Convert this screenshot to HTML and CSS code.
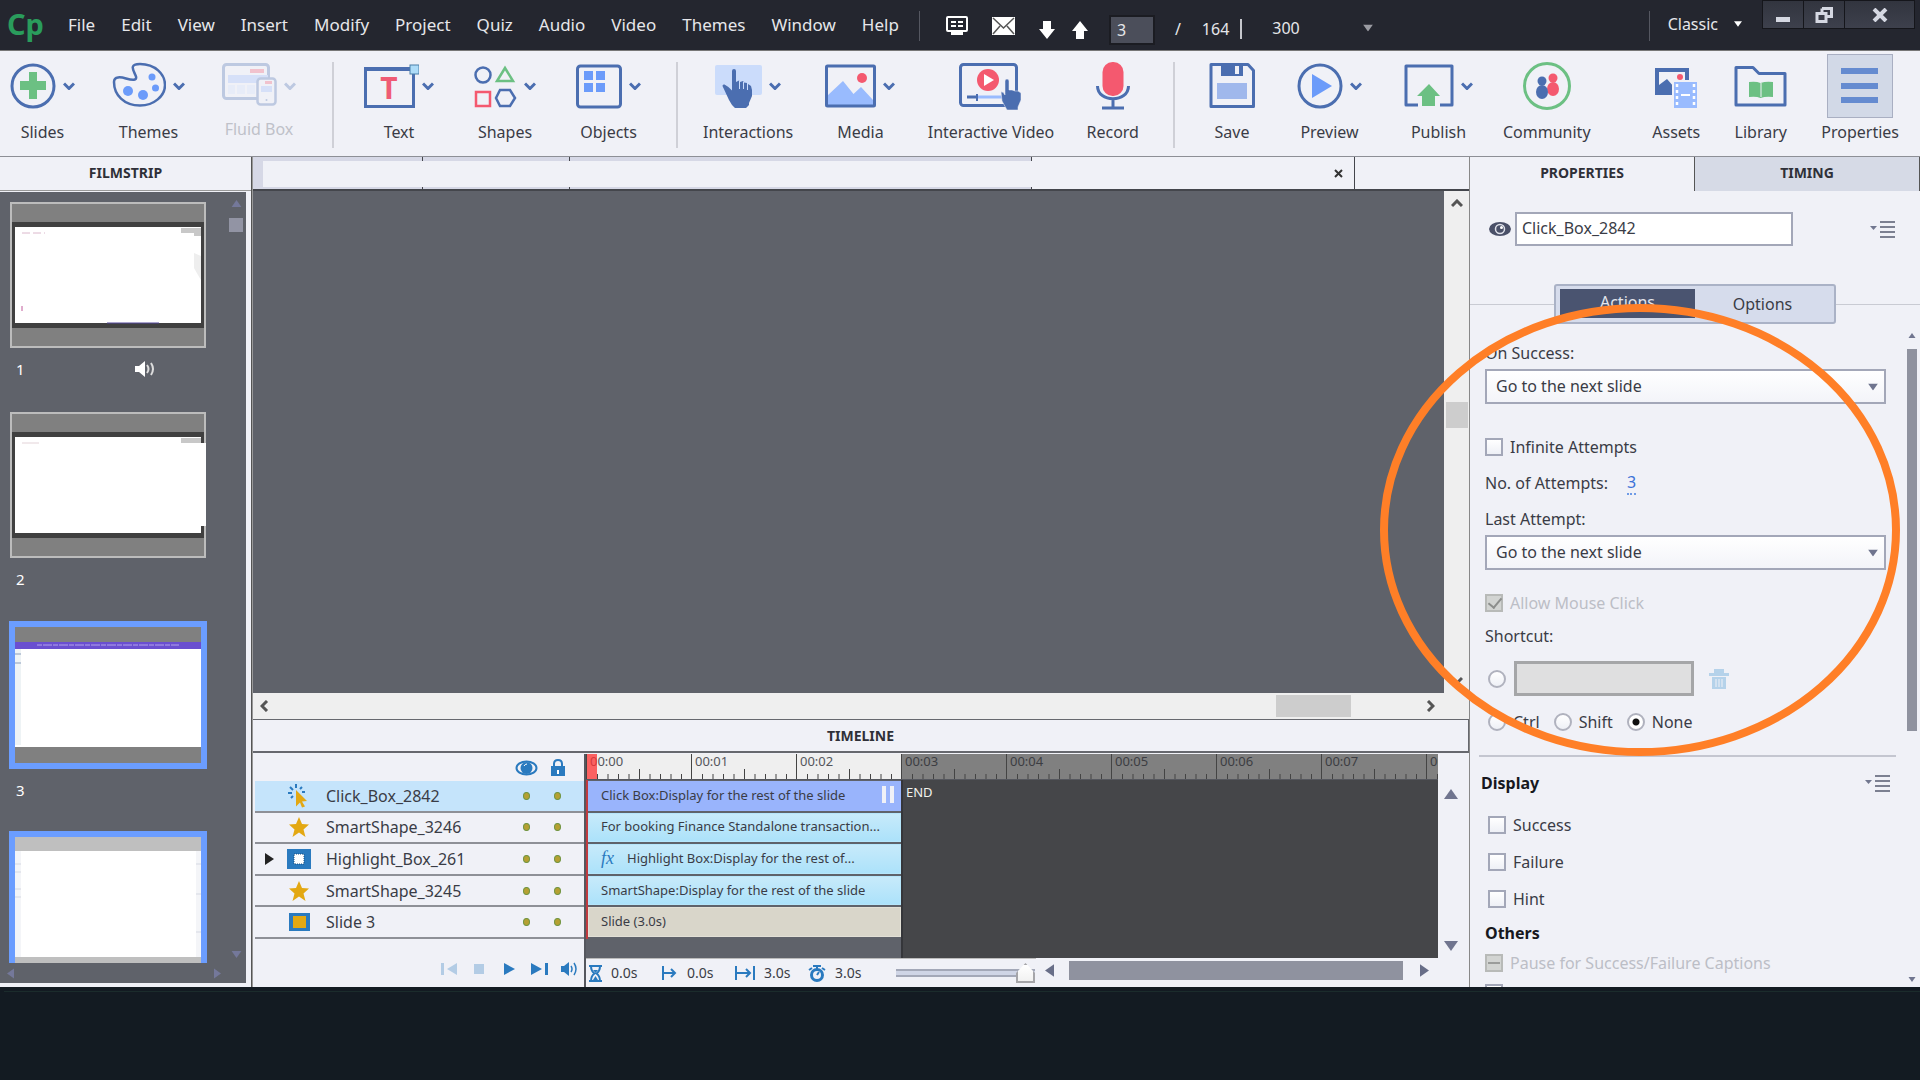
FILE: index.html
```html
<!DOCTYPE html>
<html lang="en">
<head>
    <meta charset="UTF-8">
    <meta name="viewport" content="width=device-width, initial-scale=1.0">
    <title>Captivate</title>
    <link rel="stylesheet" href="styles.css">
</head>
<body>
    <!-- shared symbols -->
    <svg class="defs" width="0" height="0">
        <symbol id="chev" viewBox="0 0 12 8"><path d="M1 1.500l5 5 5-5" fill="none" stroke="#4b6eb0" stroke-width="3"/></symbol>
        <symbol id="ticks" viewBox="0 0 105 25"><path d="M10.500 20v5M21 20v5M31.500 20v5M42 20v5M52.500 15v10M63 20v5M73.500 20v5M84 20v5M94.500 20v5" stroke="#444" stroke-width="1"/></symbol>
        <symbol id="star" viewBox="0 0 22 22"><path d="M11 1l3 7 7 .5-5.500 5 2 7.500-6.500-4.500L4.500 21l2-7.500L1 8.500 8 8z" fill="#e3a812"/></symbol>
        <symbol id="panelmenu" viewBox="0 0 26 18"><path d="M0 6h7l-3.500 4z" fill="#71778f"/><path d="M10 2h15M10 7h15M10 12h15M10 17h15" stroke="#555b70" stroke-width="1.500"/></symbol>
        <symbol id="up" viewBox="0 0 14 10"><path d="M0 10L7 0l7 10z"/></symbol>
        <symbol id="down" viewBox="0 0 14 10"><path d="M0 0h14L7 10z"/></symbol>
        <symbol id="left" viewBox="0 0 10 14"><path d="M10 0v14L0 7z"/></symbol>
        <symbol id="right" viewBox="0 0 10 14"><path d="M0 0v14l10-7z"/></symbol>
    </svg>

    <div class="app">
        <header class="menubar">
            <div class="logo">Cp</div>
            <nav class="menus">
                <a href="#">File</a><a href="#">Edit</a><a href="#">View</a><a href="#">Insert</a><a href="#">Modify</a><a href="#">Project</a><a href="#">Quiz</a><a href="#">Audio</a><a href="#">Video</a><a href="#">Themes</a><a href="#">Window</a><a href="#">Help</a>
            </nav>
            <div class="quick">
                <button aria-label="Preview in browser"><svg width="22" height="20" viewBox="0 0 22 20"><rect x="1" y="1" width="20" height="14" rx="1" fill="none" stroke="#fff" stroke-width="2"/><path d="M5 6h5M12 6h5M5 10h5M12 10h5" stroke="#fff" stroke-width="2"/><path d="M5 15h12v4H5z" fill="#fff"/></svg></button>
                <button aria-label="Mail"><svg width="23" height="18" viewBox="0 0 23 18"><path d="M0 0h23v18H0z" fill="#fff"/><path d="M1 1l10.500 10L22 1M1 17l7-8M22 17l-7-8" fill="none" stroke="#555" stroke-width="1.500"/></svg></button>
                <button class="low" aria-label="Next slide"><svg width="16" height="18" viewBox="0 0 16 18"><path d="M4 0h8v8h4l-8 10L0 8h4z" fill="#fff"/></svg></button>
                <button class="low" aria-label="Previous slide"><svg width="16" height="18" viewBox="0 0 16 18"><path d="M4 18h8v-8h4L8 0 0 10h4z" fill="#fff"/></svg></button>
                <input class="page" type="text" value="3" aria-label="Slide number">
                <span class="slash">/</span><span class="total">164</span>
                <label class="zoom"><span class="hide">Zoom</span><select><option>300</option></select><svg width="10" height="8" viewBox="0 0 14 10" fill="#9a9ba2"><use href="#down"/></svg></label>
            </div>
            <button class="classic">Classic <svg width="8" height="6" fill="#fff"><use href="#down"/></svg></button>
            <div class="winbtns">
                <button aria-label="Minimize"><svg width="16" height="16"><path d="M1 10h14v5H1z" fill="#d5d8e2"/></svg></button>
                <button aria-label="Restore"><svg width="18" height="16"><path d="M7 1.500h9.500v8H12M7 1.500V5M2 6.500h9v8H2z" fill="none" stroke="#d5d8e2" stroke-width="3"/></svg></button>
                <button class="close" aria-label="Close"><svg width="16" height="14"><path d="M2 1l12 12M14 1L2 13" stroke="#d5d8e2" stroke-width="4"/></svg></button>
            </div>
        </header>

        <div class="toolbar">
            <div class="group g1">
                <button class="tool"><span class="ico"><svg width="46" height="48"><circle cx="23" cy="24" r="21" fill="none" stroke="#4b6eb0" stroke-width="3"/><path d="M19 10h8v9h9v9h-9v9h-8v-9h-9v-9h9z" fill="#6cc083"/></svg><svg class="chev"><use href="#chev"/></svg></span>Slides</button>
                <button class="tool"><span class="ico"><svg width="54" height="48"><path d="M2 20C2 14 9 15 14 16.500c7 2 11 2 10-2C22 9 16 2 28 2c15 0 25 10 25 21S42 43.500 28 43.500C12 43.500 2 33 2 20z" fill="none" stroke="#4b6eb0" stroke-width="2.500"/><g fill="#6b9bfa"><circle cx="40" cy="15" r="3.500"/><circle cx="43.500" cy="26" r="3.500"/><circle cx="16" cy="29" r="5"/><circle cx="31" cy="33" r="5"/></g></svg><svg class="chev"><use href="#chev"/></svg></span>Themes</button>
                <button class="tool off" disabled><span class="ico"><svg width="55" height="48"><rect x="1.500" y="2.500" width="45" height="34" rx="3" fill="none" stroke="#4b6eb0" stroke-width="3"/><path d="M28 7h14v4H28zM43 19" fill="#f4596f"/><path d="M6 13h40v8H6z" fill="#9cbcfb"/><path d="M6 23h7v9H6zM15 23h8v9h-8zM25 23h8v9h-8z" fill="#d3e1fd"/><rect x="35.500" y="16.500" width="18" height="26" rx="3" fill="#f0f1f7" stroke="#4b6eb0" stroke-width="2.500"/><path d="M43 19h7v3h-7z" fill="#f4596f"/><path d="M39 24h11v6H39z" fill="#9cbcfb"/><circle cx="44.500" cy="38" r="1" fill="#4b6eb0"/></svg><svg class="chev"><use href="#chev"/></svg></span>Fluid Box</button>
            </div>
            <div class="group g2">
                <button class="tool"><span class="ico"><svg width="55" height="48"><path d="M1.500 7v37.500h48V7" fill="none" stroke="#4b6eb0" stroke-width="3"/><path d="M0 5h51v4H0z" fill="#4b6eb0"/><rect x="46" y="3" width="9" height="9" fill="#aedcf8" stroke="#4b7fa8"/><text class="tglyph" x="25" y="37" text-anchor="middle">T</text></svg><svg class="chev tight"><use href="#chev"/></svg></span>Text</button>
                <button class="tool"><span class="ico"><svg width="43" height="48" fill="none" stroke-width="2.500"><circle cx="9" cy="13" r="7.500" stroke="#4b6eb0"/><path d="M31 6l8 13H23z" stroke="#6cc083"/><path d="M2 30h14v14H2z" stroke="#f4596f"/><path d="M26 28h10l5 8-5 8H26l-4-8z" stroke="#4b6eb0"/></svg><svg class="chev"><use href="#chev"/></svg></span>Shapes</button>
                <button class="tool"><span class="ico"><svg width="46" height="48"><rect x="1.500" y="4" width="43" height="41" rx="3" fill="none" stroke="#4b6eb0" stroke-width="3"/><path d="M8 9h9v9H8zM20 9h9v9h-9zM8 21h9v9H8zM20 21h9v9h-9z" fill="#6b9bfa"/></svg><svg class="chev"><use href="#chev"/></svg></span>Objects</button>
            </div>
            <div class="group g3">
                <button class="tool"><span class="ico"><svg width="47" height="48"><rect y="3" width="47" height="30" rx="2" fill="#cbdcfb"/><path d="M17 9q0-2 2-2t2 2v11l3-1.500 1 1.500 3-1 1 1.500 3 .5 1 1 3 2 1 4v6l-3 7v2l-3 3H20l-3-3-3-5-6.500-14q0-2 2-1.500 4 2 7.500 6z" fill="#4b6eb0"/><path d="M24.500 19v8M28.500 20v7M32.500 21v7" stroke="#cbdcfb"/></svg><svg class="chev"><use href="#chev"/></svg></span>Interactions</button>
                <button class="tool"><span class="ico"><svg width="51" height="48"><path d="M2 34l16-15 10.500 13L36 25l12 13v7H2z" fill="#99bbfe"/><circle cx="37" cy="16" r="5" fill="#f4596f"/><rect x="1.500" y="4" width="48" height="40" rx="1" fill="none" stroke="#4b6eb0" stroke-width="3"/></svg><svg class="chev"><use href="#chev"/></svg></span>Media</button>
                <button class="tool"><span class="ico"><svg class="spill" width="63" height="48"><rect x="1.500" y="2.500" width="56" height="41" rx="3" fill="none" stroke="#4b6eb0" stroke-width="3"/><circle cx="29" cy="18" r="11" fill="#f4596f"/><path d="M25 12v12l10-6z" fill="#fff"/><path d="M8 35h11" stroke="#4b6eb0" stroke-width="3"/><path d="M19 35h26" stroke="#99bbfe" stroke-width="3"/><path d="M18 32v7" stroke="#4b6eb0" stroke-width="2"/><path d="M46 19q0-2 2-2t2 2v9l3 0 3 1 3 0 3 2v7l-3 7v3H48l-5-9-1-9q2-1 4 3z" fill="#4b6eb0" stroke="#f0f1f7" stroke-width=".5"/></svg></span>Interactive Video</button>
                <button class="tool"><span class="ico"><svg width="34" height="48"><rect x="6.500" y="0" width="21" height="34" rx="10" fill="#f4596f"/><path d="M1.500 24c0 17 31 17 31 0M17 37v9M6 46h22" fill="none" stroke="#4b6eb0" stroke-width="3"/></svg></span>Record</button>
            </div>
            <div class="group g4">
                <div class="sub">
                    <button class="tool"><span class="ico"><svg width="46" height="48"><path d="M2 2.500h37l5.500 6v36H2z" fill="none" stroke="#4b6eb0" stroke-width="3" stroke-linejoin="round"/><path d="M12 2h22v12H12z" fill="#4b6eb0"/><path d="M26 4h4v8h-4z" fill="#f0f1f7"/><path d="M8 21h30v16H8z" fill="#a0b8ec"/></svg></span>Save</button>
                    <button class="tool"><span class="ico"><svg width="46" height="48"><circle cx="23" cy="24" r="21" fill="none" stroke="#4b6eb0" stroke-width="3"/><path d="M15 12v24l20-12z" fill="#6b9bfa"/></svg><svg class="chev"><use href="#chev"/></svg></span>Preview</button>
                    <button class="tool"><span class="ico"><svg width="50" height="48"><path d="M14 43H2V4h46v39H36" fill="none" stroke="#4b6eb0" stroke-width="3" stroke-linejoin="round"/><path d="M25 22l11 12h-5v10H18V34h-5z" fill="#6cc083"/></svg><svg class="chev"><use href="#chev"/></svg></span>Publish</button>
                </div>
                <button class="tool"><span class="ico"><svg width="50" height="48"><circle cx="25" cy="24" r="22.500" fill="none" stroke="#6cc083" stroke-width="3"/><g fill="#f4596f"><circle cx="31" cy="16" r="4.500"/><ellipse cx="31" cy="27" rx="6" ry="7"/></g><g fill="#4b6eb0"><circle cx="20" cy="19" r="4.500"/><ellipse cx="20" cy="30" rx="6" ry="7"/></g></svg></span>Community</button>
                <div class="sub last">
                    <button class="tool"><span class="ico"><svg width="42" height="48"><path d="M0 6h34v27H0z" fill="#4b6eb0"/><path d="M4 10h26v15H19L12 17l-8 6z" fill="#f0f1f7"/><circle cx="25" cy="15" r="3" fill="#f4596f"/><path d="M17 18h25v29H17z" fill="#f0f1f7"/><path d="M19 20h23v26H19z" fill="#99bbfe"/><path d="M22 22v24M39 22v24" stroke="#fff" stroke-width="2.500" stroke-dasharray="3"/><path d="M26 33h9" stroke="#fff" stroke-width="2"/></svg></span>Assets</button>
                    <button class="tool"><span class="ico"><svg width="53" height="48"><path d="M2 5.500h17l6 6h26V43H2z" fill="none" stroke="#4b6eb0" stroke-width="3" stroke-linejoin="round"/><path d="M15 20q7-1 11.500 1Q32 19 39 20v15q-7-1-12.500 1Q22 34 15 35z" fill="#6cc083"/><path d="M27 21v14" stroke="#f0f1f7"/></svg></span>Library</button>
                    <button class="tool"><span class="ico pressed"><svg width="38" height="48"><path d="M0 6h37v6H0zM0 21h37v6H0zM0 35h37v6H0z" fill="#658bd0"/></svg></span>Properties</button>
                </div>
            </div>
        </div>

        <main class="workspace">
            <section class="filmstrip">
                <h2 class="head">FILMSTRIP</h2>
                <div class="film-body">
                    <ol class="slides">
                        <li><button class="thumb" aria-label="Slide 1"><svg width="192" height="142"><path d="M0 18h192v106H0z" fill="#404040"/><path d="M3 23h186v96H3z" fill="#fff"/><path d="M169 24h20v8h-7v-3h-13z" fill="#c8c8c8"/><path d="M182 49l7 3v24q-6-10-7-12z" fill="#eee"/><path d="M10 29h23" stroke="#dbb8cc" stroke-dasharray="8 3"/><path d="M10 102v5" stroke="#c05a9a"/><path d="M95 119h52" stroke="#53469a"/></svg></button><span class="num">1<svg width="20" height="16"><path d="M0 5h4l6-5v16l-6-5H0z" fill="#fff"/><path d="M12 4q3 4 0 8M16 2q4 6 0 12" fill="none" stroke="#ddd" stroke-width="2"/></svg></span></li>
                        <li><button class="thumb" aria-label="Slide 2"><svg class="spill" width="192" height="142"><path d="M0 18h192v106H0z" fill="#404040"/><path d="M3 23h186v96H3z" fill="#fff"/><path d="M169 24h20v5h-20z" fill="#c8c8c8"/><path d="M160 29h34v83h-34z" fill="#fff"/><path d="M10 29h17" stroke="#e3d3d8"/></svg></button><span class="num">2</span></li>
                        <li><button class="thumb picked" aria-label="Slide 3"><svg width="186" height="136"><path d="M0 15h186v7H0z" fill="#6a4fd0"/><path d="M22 18h142" stroke="#b3a5ea" stroke-dasharray="5 1 9 1"/><path d="M0 22h186v98H0z" fill="#fff"/><path d="M0 22h6v96H0z" fill="#eef3f5"/><path d="M0 27h6M0 36h6" stroke="#bcc8d8" stroke-width="2"/></svg></button><span class="num">3</span></li>
                        <li><button class="thumb picked pale" aria-label="Slide 4"><svg width="186" height="136"><path d="M0 14h186v106H0z" fill="#fff"/><path d="M0 14h6v106H0zM181 14h5v106h-5z" fill="#f4f5f8"/><path d="M0 27h6M0 35h6M0 52h6M0 60h6M181 27h5M181 57h5M181 95h5" stroke="#d5d8e2"/></svg></button></li>
                    </ol>
                    <div class="film-v"><svg width="11" height="7"><use href="#up"/></svg><i></i><svg class="end" width="11" height="7"><use href="#down"/></svg></div>
                    <div class="film-h"><svg width="7" height="11"><use href="#left"/></svg><svg width="7" height="11"><use href="#right"/></svg></div>
                </div>
            </section>

            <section class="center">
                <div class="doc-tabs">
                    <div class="doc-tab first"><i></i></div><div class="doc-tab"><i></i></div><div class="doc-tab"><i></i></div>
                    <div class="doc-tab active"><button aria-label="Close tab"><svg width="9" height="9"><path d="M1 1l7 7M8 1L1 8" stroke="#333" stroke-width="2"/></svg></button></div>
                </div>
                <div class="stage">
                    <div class="canvas"></div>
                    <div class="sb-v"><svg width="12" height="9"><path d="M1 7l5-5 5 5" fill="none" stroke="#555" stroke-width="3"/></svg><i></i><svg class="end" width="12" height="9"><path d="M1 2l5 5 5-5" fill="none" stroke="#555" stroke-width="3"/></svg></div>
                </div>
                <div class="sb-h"><svg width="9" height="12"><path d="M7 1L2 6l5 5" fill="none" stroke="#555" stroke-width="3"/></svg><i></i><svg width="9" height="12"><path d="M2 1l5 5-5 5" fill="none" stroke="#555" stroke-width="3"/></svg></div>
                <h2 class="head tl-title">TIMELINE</h2>
                <div class="timeline">
                    <div class="layers">
                        <div class="layer-head"><svg width="23" height="16"><ellipse cx="11.500" cy="8" rx="10" ry="6.500" fill="none" stroke="#2a7abf" stroke-width="2"/><circle cx="11.500" cy="8" r="6" fill="#2a7abf"/><path d="M9 6q1-2 3-2" stroke="#fff" fill="none"/></svg><svg width="14" height="18"><path d="M3 8V5q0-4 4-4t4 4v3" fill="none" stroke="#2a7abf" stroke-width="2"/><path d="M0 7h14v10H0z" fill="#2a7abf"/><path d="M7 11v4" stroke="#fff" stroke-width="2"/></svg></div>
                        <div class="layer-rows">
                            <div class="layer on"><span></span><svg width="22" height="24"><path d="M8 6l11 11-5 .5 3 5-3 1-2-5-4 4z" fill="#e3a812"/><path d="M8 0v4M2 3l3 3M0 9h4M14 3l-2 2M3 14l2-2M17 8h-3" stroke="#2a7abf" stroke-width="2"/></svg><b>Click_Box_2842</b><i></i><i></i></div>
                            <div class="layer"><span></span><svg width="22" height="22"><use href="#star"/></svg><b>SmartShape_3246</b><i></i><i></i></div>
                            <div class="layer"><span><svg width="9" height="12" fill="#222"><path d="M0 0v12l9-6z"/></svg></span><svg width="24" height="20"><path d="M0 0h24v20H0z" fill="#2a7abf"/><path d="M7 5h10v10H7z" fill="#fff" stroke="#174f80" stroke-dasharray="1"/></svg><b>Highlight_Box_261</b><i></i><i></i></div>
                            <div class="layer"><span></span><svg width="22" height="22"><use href="#star"/></svg><b>SmartShape_3245</b><i></i><i></i></div>
                            <div class="layer"><span></span><svg width="21" height="18"><path d="M0 0h21v18H0z" fill="#2a7abf"/><path d="M4 3h13v12H4z" fill="#e3a812"/></svg><b>Slide 3</b><i></i><i></i></div>
                        </div>
                        <div class="play">
                            <button class="dim" aria-label="Start"><svg width="17" height="12"><path d="M0 0h3v12H0zM16 0v12L6 6z"/></svg></button>
                            <button class="dim" aria-label="Stop"><svg width="10" height="10"><path d="M0 0h10v10H0z"/></svg></button>
                            <button aria-label="Play"><svg width="11" height="12"><path d="M0 0v12l11-6z"/></svg></button>
                            <button aria-label="End"><svg width="17" height="12"><path d="M14 0h3v12h-3zM0 0v12l11-6z"/></svg></button>
                            <button aria-label="Sound"><svg width="17" height="16"><path d="M0 5h3l5-4v14l-5-4H0z"/><path d="M10 5q2 3 0 6M13 2q4 6 0 12" fill="none" stroke="#2a7abf" stroke-width="1.500"/></svg></button>
                        </div>
                    </div>
                    <div class="tracks">
                        <div class="ruler">
                            <div class="sec lit">00:00<svg><use href="#ticks"/></svg><span class="playhead"></span></div><div class="sec lit">00:01<svg><use href="#ticks"/></svg></div><div class="sec lit">00:02<svg><use href="#ticks"/></svg></div><div class="sec">00:03<svg><use href="#ticks"/></svg></div><div class="sec">00:04<svg><use href="#ticks"/></svg></div><div class="sec">00:05<svg><use href="#ticks"/></svg></div><div class="sec">00:06<svg><use href="#ticks"/></svg></div><div class="sec">00:07<svg><use href="#ticks"/></svg></div><div class="sec">00:08<svg><use href="#ticks"/></svg></div>
                        </div>
                        <div class="lanes">
                            <div class="clips">
                                <div class="clip main">Click Box:Display for the rest of the slide<span></span></div>
                                <div class="clip">For booking Finance Standalone transaction...</div>
                                <div class="clip"><em>fx</em>Highlight Box:Display for the rest of...</div>
                                <div class="clip">SmartShape:Display for the rest of the slide</div>
                                <div class="clip slide">Slide (3.0s)</div>
                            </div>
                            <div class="after">END</div>
                        </div>
                        <div class="tl-foot">
                            <div class="stats">
                                <span><svg width="13" height="17" viewBox="0 0 13 17"><path d="M0 1h13M0 16h13" stroke="#2a7abf" stroke-width="2"/><path d="M2 1q0 5 3.500 7.500Q2 11 2 16M11 1q0 5-3.500 7.500Q11 11 11 16" fill="none" stroke="#2a7abf" stroke-width="2"/><path d="M4 15l2.500-4L9 15zM4 5h5L6.500 8z" fill="#2a7abf"/></svg>0.0s</span>
                                <span><svg width="16" height="14"><path d="M1 0v14M2 7h11M9 3l4 4-4 4" fill="none" stroke="#2a7abf" stroke-width="2"/></svg>0.0s</span>
                                <span><svg width="20" height="14"><path d="M1 0v14M2 7h13M11 3l4 4-4 4M19 0v14" fill="none" stroke="#2a7abf" stroke-width="2"/></svg>3.0s</span>
                                <span><svg width="18" height="17"><circle cx="9" cy="10" r="5.500" fill="none" stroke="#2a7abf" stroke-width="3"/><path d="M5 1h8M9 1v3M1 5l3-2M17 5l-3-2M9 10l2-3" stroke="#2a7abf" stroke-width="2"/></svg>3.0s</span>
                                <input type="range" min="0" max="100" value="100" aria-label="Timeline zoom">
                            </div>
                            <div class="tl-sb"><svg width="9" height="13"><use href="#left"/></svg><i></i><svg width="9" height="13"><use href="#right"/></svg></div>
                        </div>
                    </div>
                    <div class="tl-v"><svg width="14" height="10"><use href="#up"/></svg><svg width="14" height="10"><use href="#down"/></svg></div>
                </div>
            </section>

            <aside class="props">
                <div class="prop-tabs"><button class="head active">PROPERTIES</button><button class="head">TIMING</button></div>
                <div class="name-row">
                    <svg width="22" height="14"><ellipse cx="11" cy="7" rx="11" ry="7" fill="#4a5068"/><circle cx="11" cy="7" r="4.500" fill="#4a5068" stroke="#dfe1ea" stroke-width="1.500"/><circle cx="12.500" cy="5.500" r="1.500" fill="#fff"/></svg>
                    <input type="text" value="Click_Box_2842" aria-label="Object name">
                    <button class="pm" aria-label="Panel menu"><svg width="26" height="18"><use href="#panelmenu"/></svg></button>
                </div>
                <div class="seg-row"><div class="seg"><button class="active">Actions</button><button>Options</button></div></div>
                <form class="prop-body">
                    <div class="fields">
                        <label for="success">On Success:</label>
                        <div class="sel"><select id="success"><option>Go to the next slide</option></select><svg width="10" height="8" viewBox="0 0 14 10"><use href="#down"/></svg></div>
                        <label class="line t2"><input type="checkbox">Infinite Attempts</label>
                        <div class="line t3">No. of Attempts: <a href="#">3</a></div>
                        <label class="t3" for="last">Last Attempt:</label>
                        <div class="sel"><select id="last"><option>Go to the next slide</option></select><svg width="10" height="8" viewBox="0 0 14 10"><use href="#down"/></svg></div>
                        <label class="line t4 off"><input type="checkbox" checked disabled>Allow Mouse Click</label>
                        <label class="t5" for="short">Shortcut:</label>
                        <div class="short-row"><input type="radio" name="key" aria-label="Custom key"><input id="short" type="text" disabled><svg width="20" height="20"><path d="M0 4h20v3H0zM5 0h10v4H5zM3 8h14v12H3z" fill="#b5d2ea"/><path d="M7 10v8M10 10v8M13 10v8" stroke="#f0f1f7" stroke-width="1"/></svg></div>
                        <div class="radios"><label><input type="radio" name="key">Ctrl</label><label><input type="radio" name="key">Shift</label><label><input type="radio" name="key" checked>None</label></div>
                    </div>
                    <hr>
                    <div class="disp-head"><h3>Display</h3><button type="button" class="pm" aria-label="Display menu"><svg width="26" height="18"><use href="#panelmenu"/></svg></button></div>
                    <div class="checks">
                        <label class="line"><input type="checkbox">Success</label>
                        <label class="line"><input type="checkbox">Failure</label>
                        <label class="line"><input type="checkbox">Hint</label>
                    </div>
                    <div class="others">
                        <h3>Others</h3>
                        <label class="line off"><input type="checkbox" class="mixed" disabled>Pause for Success/Failure Captions</label>
                        <label class="line"><input type="checkbox" checked>Hand Cursor</label>
                    </div>
                </form>
                <div class="prop-sb"><svg width="8" height="5"><use href="#up"/></svg><i></i><svg width="8" height="5"><use href="#down"/></svg></div>
                <svg class="ring" width="521" height="453"><ellipse cx="260" cy="226" rx="256" ry="222" fill="none" stroke="#ff7f27" stroke-width="8"/></svg>
            </aside>
        </main>
    </div>
    <footer class="strip"></footer>
</body>
</html>
```
FILE: styles.css
```css
* { box-sizing: border-box; }
body { margin: 0; height: 100vh; display: flex; flex-direction: column; overflow: hidden; background: #131b22; font-family: "Noto Sans", Tahoma, sans-serif; font-size: 16px; line-height: 24px; color: #3a3c46; }
button, input, select { font: inherit; color: inherit; margin: 0; }
button { background: none; border: 0; padding: 0; cursor: pointer; }
svg { display: block; flex: none; }
h2, h3, ol { margin: 0; padding: 0; }
.defs { position: absolute; }
.hide { position: absolute; width: 1px; height: 1px; overflow: hidden; clip-path: inset(50%); }
.spill { overflow: visible; }
.app { flex: 1; min-height: 0; display: flex; flex-direction: column; overflow: hidden; background: #f0f1f7; }
.strip { flex: 0 0 93px; padding-top: 4px; }
.strip::before { content: ""; display: block; border-top: 1px solid #1b2c2c; margin-left: 4px; }

/* menu bar */
.menubar { flex: 0 0 51px; display: flex; align-items: flex-start; background: #24262f; color: #e6e6ea; border-bottom: 1px solid #777; padding-right: 5px; }
.logo { width: 68px; padding: 8px 0 0 7px; font-size: 29px; line-height: 32px; font-weight: bold; color: #2a9c5c; }
.menus { display: flex; gap: 26px; padding-top: 13px; font-size: 17px; }
.menus a { color: inherit; text-decoration: none; }
.quick { display: flex; align-items: center; height: 30px; margin: 11px 0 0 20px; padding-left: 26px; border-left: 1px solid #555761; }
.quick button { margin-right: 24px; }
.quick .low { margin-right: 17px; padding-top: 8px; }
.page { width: 46px; height: 30px; margin: 8px 0 0 4px; padding: 0 6px; background: #4b4e5a; border: 2px solid #1b1c22; }
.slash { margin: 6px 0 0 20px; }
.total { margin: 6px 0 0 21px; padding-right: 11px; border-right: 2px solid #c5c6cc; line-height: 20px; }
.zoom { display: flex; align-items: center; margin: 4px 0 0 30px; }
.zoom select { width: 91px; height: 24px; appearance: none; border: 0; background: none; padding: 0; }
.classic { display: flex; align-items: center; gap: 16px; height: 30px; margin: 11px 20px 0 auto; padding: 0 0 4px 18px; border-left: 1px solid #555761; }
.winbtns { display: flex; height: 29px; border: 1px solid #15161b; background: linear-gradient(#32353f, #3d404c); }
.winbtns button { width: 41px; display: flex; align-items: center; justify-content: center; border-right: 1px solid #15161b; }
.winbtns .close { width: 69px; border-right: 0; }

/* toolbar */
.toolbar { flex: 0 0 106px; display: grid; grid-template-columns: minmax(0, 334fr) minmax(0, 344fr) minmax(0, 497fr) minmax(0, 745fr); border-bottom: 1px solid #8d8f96; padding-top: 11px; }
.group { display: flex; justify-content: space-between; align-items: flex-start; height: 86px; border-right: 2px solid #cfd0d7; }
.g1 { padding: 0 36px 0 10px; }
.g2 { padding: 0 35px 0 30px; }
.g3 { padding: 0 34px 0 25px; }
.g4 { padding: 0 21px 0 34px; border-right: 0; justify-content: flex-start; gap: 30px; }
.sub { display: flex; gap: 42px; }
.sub.last { gap: 34px; margin-left: auto; }
.tool { display: flex; flex-direction: column; align-items: center; gap: 10px; white-space: nowrap; }
.ico { display: flex; align-items: center; gap: 7px; height: 48px; }
.chev { width: 12px; height: 8px; }
.chev.tight { margin-left: -4px; }
.tool.off { color: #bfc1c9; gap: 7px; }
.off .ico { opacity: .3; }
.pressed { width: 66px; height: 64px; margin: -8px 0; justify-content: center; background: #d2d9e7; border: 1px solid #a9afc2; }
.tglyph { font-weight: bold; font-size: 30px; fill: #ef5b74; }

.workspace { flex: 1; min-height: 0; display: grid; grid-template-columns: 252px minmax(0, 1fr) 450px; }
.head { height: 34px; font-size: 14px; line-height: 32px; font-weight: bold; text-align: center; color: #2f3038; }

/* filmstrip */
.filmstrip { display: flex; flex-direction: column; min-height: 0; border-right: 1px solid #555; padding-bottom: 4px; }
.filmstrip .head { border-bottom: 1px solid #999; }
.film-body { flex: 1; min-height: 0; margin: 1px 5px 0 0; background: #5f626a; display: grid; grid-template: minmax(0, 1fr) 20px / 1fr 20px; }
.slides { list-style: none; padding: 9px 0 0 9px; overflow: hidden; }
.slides li { display: flow-root; height: 210px; }
.thumb { display: block; width: 196px; height: 146px; margin: 1px 1px 0; border: 2px solid #bcbcbc; background: #808080; }
.thumb.picked { width: 198px; height: 148px; margin: 0; border: 6px solid #6b9dff; }
.thumb.pale { background: #bfbfbf; }
.num { display: flex; align-items: center; gap: 110px; padding: 9px 0 0 7px; color: #fff; font-size: 15px; }
.film-v { display: flex; flex-direction: column; align-items: center; padding: 8px 0 5px; fill: #74789a; }
.film-v i { width: 14px; height: 14px; margin-top: 11px; background: #9294a4; }
.film-v .end { margin-top: auto; }
.film-h { display: flex; justify-content: space-between; align-items: center; padding: 0 5px 0 7px; fill: #74789a; }

/* document area */
.center { display: flex; flex-direction: column; min-width: 0; min-height: 0; border-left: 1px solid #999; border-right: 1px solid #888; }
.doc-tabs { flex: 0 0 34px; display: grid; grid-template-columns: 170fr 147fr 461fr 323fr 114px; border-bottom: 2px solid #44464c; }
.doc-tab { background: #d6d8e6; border-right: 1px solid #44464c; padding: 4px 0 2px; }
.doc-tab i { display: block; height: 100%; margin-right: -1px; background: #f0f1f7; }
.doc-tab.first { padding-left: 10px; }
.doc-tab.active { padding: 0 11px; background: #f0f1f7; display: flex; justify-content: flex-end; align-items: center; }
.stage { flex: 1; min-height: 0; display: flex; }
.canvas { flex: 1; background: #5f626a; }
.sb-v { flex: 0 0 25px; display: flex; flex-direction: column; align-items: center; padding: 8px 0; background: #efefef; }
.sb-v i { width: 22px; height: 26px; margin-top: 194px; background: #cdcdcd; }
.sb-v .end { margin-top: auto; }
.sb-h { flex: 0 0 26px; display: flex; align-items: center; padding: 0 34px 0 7px; background: #efefef; }
.sb-h i { width: 75px; height: 22px; margin: 0 75px 0 auto; background: #cdcdcd; }
.tl-title { flex: none; border: solid #66686e; border-width: 1px 1px 2px 0; line-height: 31px; }

/* timeline */
.timeline { flex: 0 0 234px; display: flex; padding-top: 1px; }
.layers { width: 333px; display: flex; flex-direction: column; border-right: 2px solid #55575e; padding-left: 2px; }
.layer-head { height: 27px; display: flex; align-items: center; justify-content: flex-end; gap: 13px; padding-right: 19px; }
.layer-rows { height: 158px; display: grid; grid-auto-rows: 1fr; }
.layer { display: grid; grid-template-columns: 28px 32px 1fr 31px 31px; align-items: center; justify-items: center; padding-right: 11px; border-bottom: 2px solid #8e9097; }
.layer.on { background: #c5e4fb; }
.layer b { justify-self: start; margin-left: 11px; font-weight: normal; }
.layer i { width: 7px; height: 8px; border-radius: 50%; background: #b5a032; border: 1px solid #6f9440; }
.play { flex: 1; display: grid; grid-template-columns: repeat(5, 30px); align-items: center; justify-items: center; justify-content: end; padding-top: 11px; fill: #2a7abf; }
.play .dim { opacity: .3; }
.tracks { flex: 1; min-width: 0; display: flex; flex-direction: column; }
.ruler { height: 26px; display: flex; overflow-x: clip; background: #808080; border-bottom: 1px solid #55575e; }
.sec { flex: 0 0 105px; position: relative; border-left: 1px solid #444; padding-left: 3px; font-size: 13px; line-height: 14px; background: #808080; color: #3c3d42; }
.sec.lit { background: #efefef; color: #55565c; }
.sec svg { position: absolute; left: 0; top: 0; width: 105px; height: 25px; }
.playhead { position: absolute; left: 0; top: 0; width: 10px; height: 25px; background: rgba(255, 50, 50, .75); }
.lanes { height: 178px; display: flex; background: #5f626a; }
.clips { width: 315px; height: 159px; padding-top: 1px; display: grid; grid-auto-rows: 1fr; border-left: 2px solid #c13a3f; }
.clip { display: flex; align-items: center; margin-bottom: 2px; padding: 0 6px 2px 12px; font-size: 13px; white-space: nowrap; overflow: hidden; background: linear-gradient(#c7eafa, #ace2fa); border: 1px solid #b5e5fa; }
.clip.main { background: #99b4fc; border-color: #99b4fc; }
.clip.slide { background: #d9d6ca; border-color: #e2e0d6; }
.clip em { width: 26px; font-family: "Liberation Serif", serif; font-size: 18px; color: #2a7abf; }
.clip span { width: 12px; height: 17px; margin-left: auto; border: solid #f0f1f7; border-width: 0 4px; }
.after { flex: 1; background: #454649; border-left: 2px solid #35363a; padding-left: 3px; color: #f2f2ee; font-size: 13px; }
.tl-foot { flex: 1; display: flex; }
.stats { flex: 0 0 450px; display: flex; align-items: center; border-top: 1px solid #bbb; font-size: 14px; }
.stats span { display: flex; align-items: center; gap: 9px; width: 73px; padding-left: 3px; }
.stats input { appearance: none; width: 139px; height: 20px; margin-left: 18px; background: linear-gradient(#cfd5e6, #cfd5e6) center / 100% 4px no-repeat, linear-gradient(#a3a8b8, #a3a8b8) center / 100% 8px no-repeat; }
.stats input::-webkit-slider-thumb { appearance: none; width: 19px; height: 20px; background: linear-gradient(#fff, #f1f1f1); border: 2px solid #a5a5a9; clip-path: polygon(50% 0, 100% 50%, 100% 100%, 0 100%, 0 50%); }
.tl-sb { flex: 1; display: flex; align-items: center; padding: 0 9px 5px; fill: #686e88; }
.tl-sb i { flex: 1; height: 19px; margin: 0 17px 0 15px; background: #8f929f; }
.tl-v { width: 31px; display: flex; flex-direction: column; justify-content: space-between; padding: 35px 0 36px 6px; fill: #70758f; }

/* properties */
.props { position: relative; display: grid; grid-template: 34px 55px auto minmax(0, 1fr) / minmax(0, 1fr) 16px; min-height: 0; }
.prop-tabs { grid-column: 1 / 3; display: flex; border-bottom: 1px solid #777; }
.prop-tabs .head { flex: 1; padding-bottom: 2px; background: #d6dae6; border-left: 1px solid #555; border-right: 1px solid #555; }
.prop-tabs .active { background: #f0f1f7; border: 0; }
.name-row { grid-column: 1 / 3; display: flex; align-items: center; padding: 21px 24px 0 19px; }
.name-row input { width: 278px; height: 34px; margin-left: 4px; padding: 0 5px 2px; border: 2px solid #a3a7b8; background: #fff; }
.pm { margin-left: auto; }
.seg-row { grid-column: 1 / 3; display: flex; justify-content: center; margin-top: 38px; background: linear-gradient(#c9cbd3, #c9cbd3) center / 100% 1px no-repeat; }
.seg { width: 282px; height: 40px; display: flex; padding: 3px 4px 4px; background: #d6dcec; border: 2px solid #aab2c6; border-radius: 3px; }
.seg button { flex: 1; }
.seg .active { background: #4a5470; color: #e3e5ec; padding-bottom: 4px; }
.prop-body { overflow: hidden; padding: 17px 8px 0 9px; }
.prop-body label { display: block; }
.fields { padding: 0 10px 0 6px; }
.prop-body .line { display: flex; align-items: center; gap: 7px; }
.fields .t2 { margin-top: 31px; }
.fields .t3 { margin-top: 12px; }
.fields .t4 { margin-top: 21px; }
.fields .t5 { margin-top: 9px; }
.line a { margin-left: 12px; line-height: 22px; color: #3c72d8; text-decoration: none; border-bottom: 2px dotted #6f9be6; }
.sel { position: relative; margin-top: 4px; }
.sel select { display: block; width: 100%; height: 35px; appearance: none; padding: 0 9px 2px; border: 2px solid #a3a7b8; border-radius: 0; background: linear-gradient(#fff, #f3f4f9); }
.sel svg { position: absolute; right: 8px; top: 14px; fill: #70758f; }
input[type=checkbox], input[type=radio] { appearance: none; flex: none; width: 18px; height: 18px; background: linear-gradient(#fff, #eef0f6); border: 2px solid #a3a7b8; }
input[type=radio] { border-radius: 50%; border-color: #b0b2be; }
input[type=radio]:checked { background: radial-gradient(circle, #111 3px, #fff 4px); }
input[type=checkbox]:disabled { background: #d2d4d2; border-color: #b8bab8; }
input[type=checkbox]:checked::after { content: ""; display: block; width: 6px; height: 11px; margin: -1px 0 0 4px; border: solid #8c8e8c; border-width: 0 2px 2px 0; transform: rotate(40deg); }
.mixed::after { content: ""; display: block; height: 2px; margin: 6px 1px 0; background: #9a9c9a; }
.prop-body .off { color: #bcbec6; }
.short-row { display: flex; align-items: center; margin-top: 13px; padding-left: 3px; }
.short-row input[type=text] { width: 180px; height: 35px; margin: 0 15px 0 8px; background: #dfdfe0; border: 3px solid #a5a6a8; }
.radios { display: flex; margin-top: 14px; padding-left: 3px; gap: 14px; }
.radios label { display: flex; align-items: center; gap: 7px; }
hr { height: 2px; margin: 21px 0 14px; border: 0; background: #c4c6d0; }
h3 { font-size: 16px; line-height: 24px; color: #17181e; }
.disp-head { display: flex; align-items: center; padding: 0 5px 0 2px; }
.checks { display: grid; gap: 13px; margin: 18px 0 10px; padding-left: 9px; }
.others { display: grid; gap: 6px; padding-left: 6px; }
.prop-sb { display: flex; flex-direction: column; align-items: center; padding: 9px 0 5px; fill: #70758f; }
.prop-sb i { width: 10px; height: 382px; margin: 11px 0 auto; background: #8f929f; }
.ring { position: absolute; left: -90px; top: 147px; pointer-events: none; }
```
